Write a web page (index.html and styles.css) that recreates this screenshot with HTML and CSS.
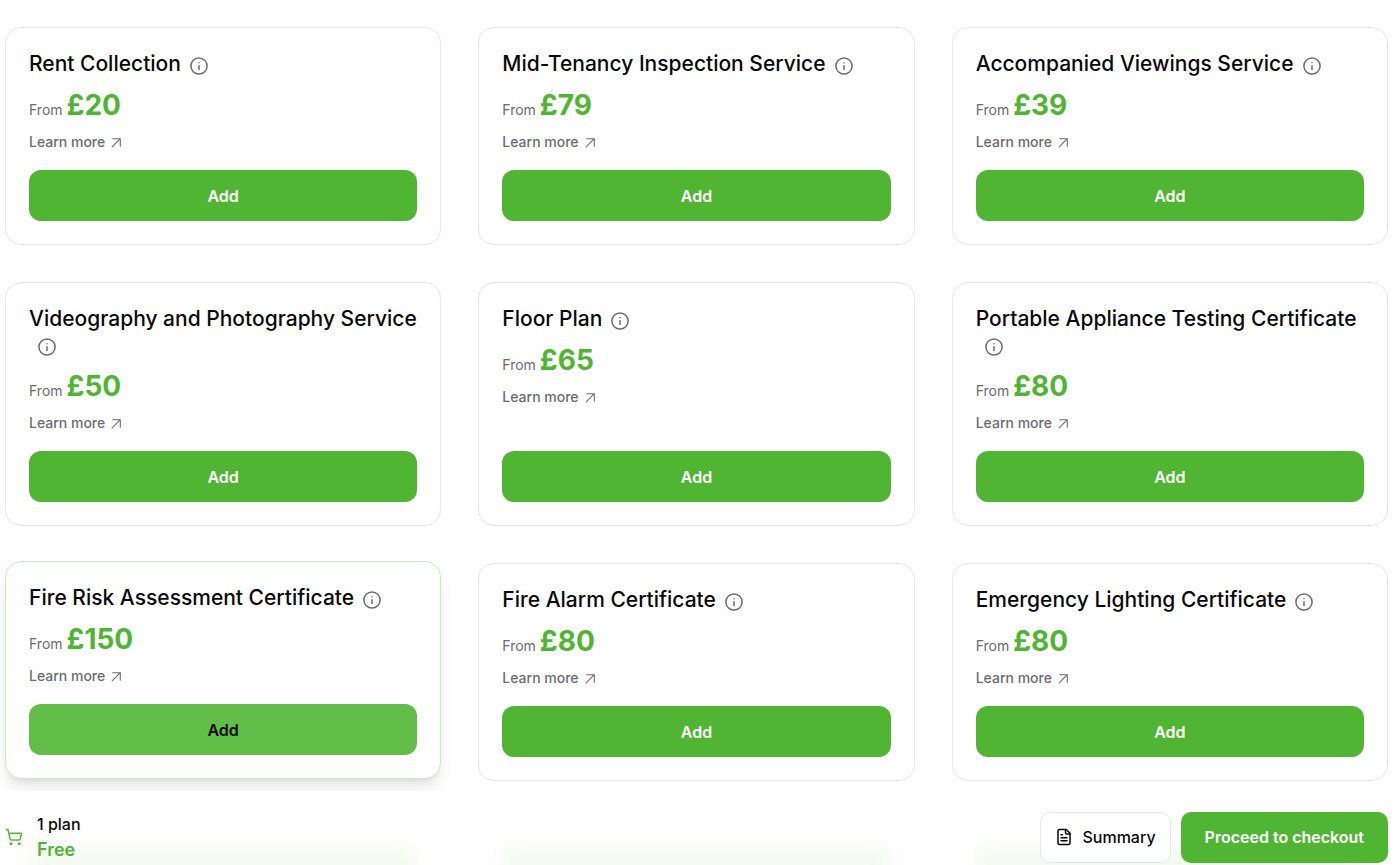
FILE: index.html
```html
<!DOCTYPE html>
<html lang="en">
<head>
  <meta charset="UTF-8">
  <meta name="viewport" content="width=device-width, initial-scale=1.0">
  <title>Landlord Services</title>
  <link rel="stylesheet" href="styles.css">
</head>
<body>
  <!-- Shared icons -->
  <svg class="sprite" aria-hidden="true">
    <symbol id="icon-info" viewBox="0 0 24 24">
      <circle cx="12" cy="12" r="10.8"/>
      <path d="M12 16.500v-5M12 7.500h.01"/>
    </symbol>
    <symbol id="icon-arrow" viewBox="0 0 24 24">
      <path d="M5 5h14v14M4 20 19 5"/>
    </symbol>
  </svg>

  <main class="services-grid" id="servicesGrid"></main>

  <footer class="cart-bar">
    <div class="glow-row" aria-hidden="true">
      <div class="glow"></div>
      <div class="glow"></div>
      <div class="glow"></div>
    </div>
    <div class="cart-info">
      <svg class="icon cart-icon" viewBox="0 0 24 24" aria-hidden="true">
        <circle cx="8" cy="21" r="1"/>
        <circle cx="19" cy="21" r="1"/>
        <path d="M2.05 2.05h2l2.66 12.42a2 2 0 0 0 2 1.58h9.78a2 2 0 0 0 1.95-1.57l1.65-7.43H5.12"/>
      </svg>
      <div>
        <div class="cart-count">1 plan</div>
        <div class="cart-total">Free</div>
      </div>
    </div>
    <div class="cart-actions">
      <button type="button" class="btn btn-outline">
        <svg class="icon summary-icon" viewBox="0 0 24 24" aria-hidden="true">
          <path d="M15 2H6a2 2 0 0 0-2 2v16a2 2 0 0 0 2 2h12a2 2 0 0 0 2-2V7Z"/>
          <path d="M14 2v4a2 2 0 0 0 2 2h4M10 9H8M16 13H8M16 17H8"/>
        </svg>
        Summary
      </button>
      <button type="button" class="btn btn-checkout">Proceed to checkout</button>
    </div>
  </footer>

  <script>
    const services = [
      { name: 'Rent Collection', price: 20 },
      { name: 'Mid-Tenancy Inspection Service', price: 79 },
      { name: 'Accompanied Viewings Service', price: 39 },
      { name: 'Videography and Photography Service', price: 50 },
      { name: 'Floor Plan', price: 65 },
      { name: 'Portable Appliance Testing Certificate', price: 80 },
      { name: 'Fire Risk Assessment Certificate', price: 150, active: true },
      { name: 'Fire Alarm Certificate', price: 80 },
      { name: 'Emergency Lighting Certificate', price: 80 }
    ];

    function createServiceCard(service) {
      const card = document.createElement('article');
      card.className = 'service-card' + (service.active ? ' active' : '');
      card.innerHTML = `
        <h2 class="service-name">${service.name}<button type="button" class="info-btn" aria-label="About ${service.name}">
            <svg class="icon info-icon"><use href="#icon-info"/></svg>
          </button>
        </h2>
        <p class="service-price">From <strong>£${service.price}</strong></p>
        <a class="learn-more" href="#">Learn more <svg class="icon arrow-icon"><use href="#icon-arrow"/></svg></a>
        <button type="button" class="btn btn-add">Add</button>
      `;
      return card;
    }

    const servicesGrid = document.getElementById('servicesGrid');
    services.forEach(service => servicesGrid.appendChild(createServiceCard(service)));
  </script>
</body>
</html>
```

FILE: styles.css
```css
:root {
  --primary: #50b533;
  --text: #09090b;
  --muted: #6b6b70;
  --border: #e7e7e9;
}

* {
  margin: 0;
  padding: 0;
  box-sizing: border-box;
}

body {
  display: flex;
  flex-direction: column;
  min-height: 100vh;
  font-family: Inter, sans-serif;
  font-size: 16px;
  background: #fefefe;
  color: var(--text);
}

button {
  font-family: inherit;
  cursor: pointer;
}

.sprite {
  position: absolute;
  width: 0;
  height: 0;
}

.icon {
  fill: none;
  stroke: currentColor;
  stroke-width: 2;
  stroke-linecap: round;
  stroke-linejoin: round;
}

.services-grid {
  display: grid;
  grid-template-columns: repeat(3, 1fr);
  gap: 37px;
  padding: 27px 12px 10px 5px;
}

.service-card {
  display: flex;
  flex-direction: column;
  padding: 23px;
  background: #fff;
  border: 1px solid var(--border);
  border-radius: 16px;
}

.service-card.active {
  border-color: #cbe9c2;
  box-shadow: 0 10px 15px -3px rgba(0, 0, 0, 0.1), 0 4px 6px -4px rgba(0, 0, 0, 0.1);
  transform: translateY(-2px);
}

.service-name {
  margin-bottom: 10px;
  font-size: 21px;
  font-weight: 500;
  line-height: 26px;
}

.info-btn {
  width: 18px;
  height: 18px;
  margin-left: 9px;
  background: none;
  border: none;
  color: var(--muted);
  vertical-align: -4px;
}

.info-icon {
  display: block;
  width: 18px;
  height: 18px;
}

.service-price {
  margin-bottom: 4px;
  color: var(--muted);
  font-size: 14px;
  line-height: 36px;
}

.service-price strong {
  color: var(--primary);
  font-size: 28px;
  font-weight: 700;
}

.learn-more {
  display: flex;
  align-items: center;
  align-self: flex-start;
  gap: 5px;
  margin-bottom: 18px;
  color: var(--muted);
  font-size: 14px;
  font-weight: 500;
  line-height: 20px;
  text-decoration: none;
}

.arrow-icon {
  width: 13px;
  height: 13px;
}

.btn {
  height: 51px;
  border: none;
  border-radius: 10px;
  font-size: 16px;
  font-weight: 500;
}

.btn-add {
  margin-top: auto;
  border-radius: 12px;
  background: var(--primary);
  color: #fff;
  font-weight: 600;
}

.active .btn-add {
  background: #63bd49;
  color: var(--text);
}

.cart-bar {
  position: sticky;
  bottom: 0;
  display: flex;
  justify-content: space-between;
  align-items: center;
  padding: 20px 12px 2px 5px;
  overflow: hidden;
  background: #fefefe;
}

/* soft green light behind the bar, one per column */
.glow-row {
  position: absolute;
  inset: 56px 12px 0 5px;
  display: grid;
  grid-template-columns: repeat(3, 1fr);
  gap: 93px;
  padding: 0 28px;
}

.glow {
  height: 60px;
  background: #f3faf0;
  filter: blur(8px);
}

.cart-info,
.cart-actions {
  position: relative;
  display: flex;
  align-items: center;
}

.cart-info {
  gap: 14px;
  font-size: 16px;
  line-height: 26px;
}

.cart-icon {
  width: 18px;
  height: 18px;
  color: var(--primary);
}

.cart-count {
  font-weight: 500;
}

.cart-total {
  color: var(--primary);
  font-size: 18px;
  font-weight: 600;
}

.cart-actions {
  gap: 10px;
}

.btn-outline {
  display: flex;
  align-items: center;
  gap: 9px;
  padding: 0 14px;
  background: #fff;
  border: 1px solid var(--border);
  color: var(--text);
}

.summary-icon {
  width: 18px;
  height: 18px;
}

.btn-checkout {
  padding: 0 24px;
  background: var(--primary);
  color: #fff;
  font-weight: 600;
}
```
